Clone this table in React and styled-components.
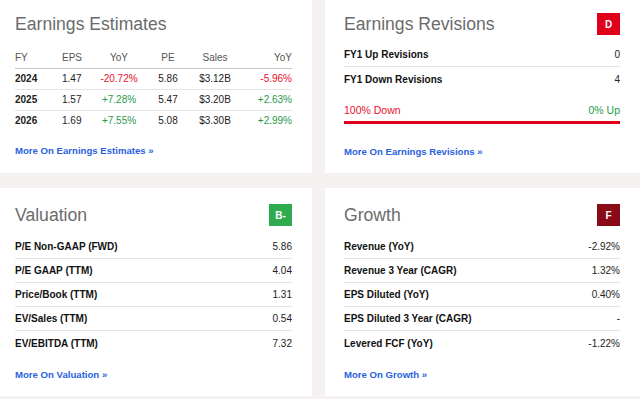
import React from 'react';
import styled, { createGlobalStyle } from 'styled-components';

const GlobalStyle = createGlobalStyle`
  html, body {
    margin: 0;
    padding: 0;
    background: #f4f1f0;
    overflow: hidden;
  }
  body {
    font-family: 'Liberation Sans', Arial, sans-serif;
    -webkit-font-smoothing: antialiased;
  }
`;

const Grid = styled.div`
  display: grid;
  grid-template-columns: 316px 315px;
  grid-template-rows: 176px 208px;
  column-gap: 13px;
  row-gap: 15px;
  margin: -3px 0 0 -4px;
  width: 644px;
`;

const Card = styled.section`
  background: #fff;
  padding: 16px 20px 0 19px;
  display: flex;
  flex-direction: column;
`;

const CardHeader = styled.div`
  display: flex;
  justify-content: space-between;
  align-items: center;
  height: 22px;
`;

const Title = styled.h2`
  margin: 0;
  font-size: 17.6px;
  font-weight: 400;
  line-height: 22px;
  color: #6b6b6b;
`;

const colors = { red: '#e0001b', darkred: '#8b0a18', green: '#2fab4f' };

const Badge = styled.span`
  width: 23px;
  height: 22px;
  background: ${({ tone }) => colors[tone]};
  color: #fff;
  font-size: 10px;
  font-weight: 700;
  display: flex;
  align-items: center;
  justify-content: center;
`;

const Table = styled.table`
  margin-top: 11px;
  border-collapse: collapse;
  width: 100%;
  font-size: 10px;
`;

const Th = styled.th`
  height: 22px;
  padding: 0;
  font-weight: 400;
  color: #555;
  text-align: ${({ align }) => align || 'center'};
  border-bottom: 1.5px solid #c4c8cc;
`;

const Td = styled.td`
  height: 19.8px;
  padding: 0;
  color: ${({ tone }) => (tone === 'up' ? '#1f9a4a' : tone === 'down' ? '#e8112d' : '#222')};
  font-weight: ${({ bold }) => (bold ? 700 : 400)};
  text-align: ${({ align }) => align || 'center'};
  tr:not(:last-child) > & {
    border-bottom: 1px solid #e4e4e4;
  }
`;

const Rows = styled.div`
  margin-top: ${({ gap }) => gap}px;
  display: flex;
  flex-direction: column;
`;

const Row = styled.div`
  box-sizing: border-box;
  display: flex;
  justify-content: space-between;
  align-items: center;
  height: 24px;
  font-size: 10px;
  color: #111;
  &:not(:last-child) {
    border-bottom: 1px solid #e2e2e2;
  }
`;

const Label = styled.span`
  font-weight: 700;
`;

const Value = styled.span`
  color: #222;
`;

const SplitLabels = styled.div`
  margin-top: 12px;
  display: flex;
  justify-content: space-between;
  font-size: 10.5px;
  line-height: 14px;
`;

const Down = styled.span`
  color: #e8112d;
`;

const Up = styled.span`
  color: #1f9a4a;
`;

const Bar = styled.div`
  margin-top: 4px;
  height: 3px;
  background: #e0001b;
`;

const MoreLink = styled.a`
  margin-top: ${({ gap }) => gap}px;
  font-size: 9.6px;
  font-weight: 700;
  line-height: 16px;
  color: #2a62e0;
  text-decoration: none;
`;

const estimates = [
  ['2024', '1.47', '-20.72%', '5.86', '$3.12B', '-5.96%'],
  ['2025', '1.57', '+7.28%', '5.47', '$3.20B', '+2.63%'],
  ['2026', '1.69', '+7.55%', '5.08', '$3.30B', '+2.99%'],
];

const valuation = [
  ['P/E Non-GAAP (FWD)', '5.86'],
  ['P/E GAAP (TTM)', '4.04'],
  ['Price/Book (TTM)', '1.31'],
  ['EV/Sales (TTM)', '0.54'],
  ['EV/EBITDA (TTM)', '7.32'],
];

const growth = [
  ['Revenue (YoY)', '-2.92%'],
  ['Revenue 3 Year (CAGR)', '1.32%'],
  ['EPS Diluted (YoY)', '0.40%'],
  ['EPS Diluted 3 Year (CAGR)', '-'],
  ['Levered FCF (YoY)', '-1.22%'],
];

const tone = (v) => (v.startsWith('-') ? 'down' : 'up');

const MetricList = ({ items, gap }) => (
  <Rows gap={gap}>
    {items.map(([label, value]) => (
      <Row key={label}>
        <Label>{label}</Label>
        <Value>{value}</Value>
      </Row>
    ))}
  </Rows>
);

const App = () => (
  <>
    <GlobalStyle />
    <Grid>
      <Card>
        <CardHeader>
          <Title>Earnings Estimates</Title>
        </CardHeader>
        <Table>
          <colgroup>
            <col style={{ width: 47 }} />
            <col style={{ width: 30 }} />
            <col style={{ width: 54 }} />
            <col style={{ width: 44 }} />
            <col style={{ width: 50 }} />
            <col />
          </colgroup>
          <thead>
            <tr>
              <Th align="left">FY</Th>
              <Th align="left">EPS</Th>
              <Th>YoY</Th>
              <Th>PE</Th>
              <Th>Sales</Th>
              <Th align="right">YoY</Th>
            </tr>
          </thead>
          <tbody>
            {estimates.map(([fy, eps, yoy, pe, sales, yoy2]) => (
              <tr key={fy}>
                <Td align="left" bold>{fy}</Td>
                <Td align="left">{eps}</Td>
                <Td tone={tone(yoy)}>{yoy}</Td>
                <Td>{pe}</Td>
                <Td>{sales}</Td>
                <Td align="right" tone={tone(yoy2)}>{yoy2}</Td>
              </tr>
            ))}
          </tbody>
        </Table>
        <MoreLink href="#" gap={13}>More On Earnings Estimates »</MoreLink>
      </Card>

      <Card>
        <CardHeader>
          <Title>Earnings Revisions</Title>
          <Badge tone="red">D</Badge>
        </CardHeader>
        <Rows gap={8}>
          <Row>
            <Label>FY1 Up Revisions</Label>
            <Value>0</Value>
          </Row>
          <Row>
            <Label>FY1 Down Revisions</Label>
            <Value>4</Value>
          </Row>
        </Rows>
        <SplitLabels>
          <Down>100% Down</Down>
          <Up>0% Up</Up>
        </SplitLabels>
        <Bar />
        <MoreLink href="#" gap={20}>More On Earnings Revisions »</MoreLink>
      </Card>

      <Card>
        <CardHeader>
          <Title>Valuation</Title>
          <Badge tone="green">B-</Badge>
        </CardHeader>
        <MetricList items={valuation} gap={9} />
        <MoreLink href="#" gap={12}>More On Valuation »</MoreLink>
      </Card>

      <Card>
        <CardHeader>
          <Title>Growth</Title>
          <Badge tone="darkred">F</Badge>
        </CardHeader>
        <MetricList items={growth} gap={9} />
        <MoreLink href="#" gap={12}>More On Growth »</MoreLink>
      </Card>
    </Grid>
  </>
);

export default App;
